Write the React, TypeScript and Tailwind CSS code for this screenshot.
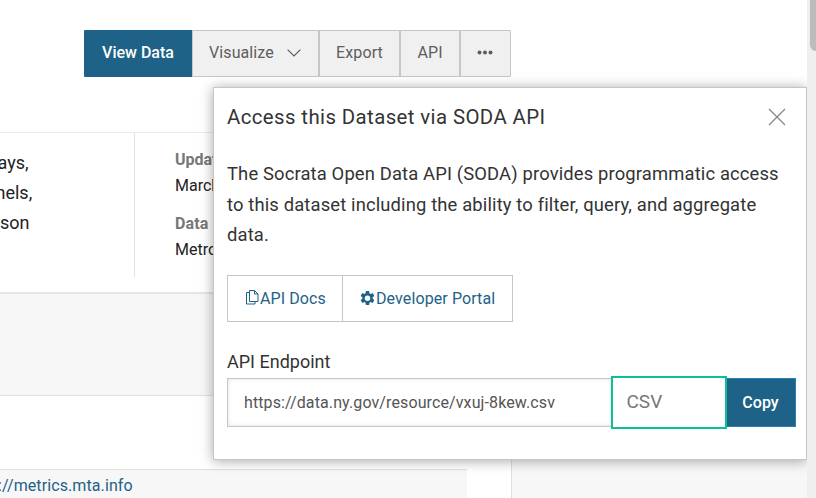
import React from "react";

const toolButton =
  "h-[47px] shrink-0 border border-[#c6c6c6] bg-[#f0f0f0] flex items-center text-[#5e5e5e] text-[16px] leading-none pb-[1px] tracking-[0.1px]";

function Toolbar() {
  return (
    <div className="flex pl-[84px] pt-[30px] h-[132px] items-start">
      <button className="flex h-[47px] w-[108px] items-center justify-center rounded-l-[1px] bg-[#1e6287] pb-[1px] text-[16px] font-medium leading-none text-white">
        View Data
      </button>
      <button className={`${toolButton} w-[127px] pl-4`}>
        Visualize
        <svg className="ml-[13px] mb-px" width="14" height="8" viewBox="0 0 14 8" fill="none" stroke="#5e5e5e" strokeWidth="1.2">
          <path d="M0.6 0.6 7 7 13.4 0.6" />
        </svg>
      </button>
      <button className={`${toolButton} w-[81px] justify-center`}>Export</button>
      <button className={`${toolButton} w-[60px] justify-center`}>API</button>
      <button className={`${toolButton} w-[51px] justify-center rounded-r-[1px]`}>
        <svg className="mb-[2px] mr-[2px]" width="16" height="5" viewBox="0 0 16 5" fill="#5e5e5e">
          <circle cx="2.5" cy="2.5" r="2" />
          <circle cx="8" cy="2.5" r="2" />
          <circle cx="13.5" cy="2.5" r="2" />
        </svg>
      </button>
    </div>
  );
}

function Page() {
  return (
    <div className="flex h-[498px] w-[807px] shrink-0 flex-col overflow-hidden bg-[#f7f7f7]">
      <div className="h-[294px] shrink-0 border-b-2 border-[#e4e4e4] bg-white">
        <Toolbar />
        <div className="flex h-[145px] border-t border-[#ebebeb]">
          <div className="h-[144px] w-[135px] border-r border-[#e2e2e2] pt-[15px] text-[18px] leading-[30px] text-[#222] whitespace-nowrap">
            <p className="-ml-[2.5px]">ays,</p>
            <p className="-ml-[4.5px]">nels,</p>
            <p>son</p>
          </div>
          <div className="pl-10 pt-[14px] text-[16px] leading-[26px] text-[#222] whitespace-nowrap">
            <p className="font-bold text-[#777]">Updated</p>
            <p>March 5, 2024</p>
            <p className="mt-3 font-bold tracking-[0.1px] text-[#777]">Data</p>
            <p>Metropolitan</p>
          </div>
        </div>
      </div>
      <div className="mt-[101px] h-[103px] w-[512px] border-r border-t border-[#e0e0e0] bg-white pt-[73px]">
        <div className="h-[30px] w-[467px] border-t border-[#e0e0e0] bg-[#f7f7f7] pt-[5px] text-[16px] leading-[22px] tracking-[0.1px] text-[#1e6287]">
          <span className="-ml-[2px]">://metrics.mta.info</span>
        </div>
      </div>
    </div>
  );
}

function ApiPanel() {
  return (
    <section className="absolute left-[213px] top-[87px] flex h-[373px] w-[594px] flex-col border border-[#c6c6c6] bg-white px-[13px] text-[#333] shadow-[0_1px_12px_rgba(0,0,0,0.35)]">
      <header className="flex h-[58px] items-center justify-between pr-[7px]">
        <h2 className="text-[20.4px] leading-none tracking-[0.4px]">Access this Dataset via SODA API</h2>
        <svg width="18" height="18" viewBox="0 0 18 18" stroke="#888" strokeWidth="1.3">
          <path d="M1 1 17 17M17 1 1 17" />
        </svg>
      </header>
      <p className="mt-[13px] whitespace-nowrap text-[18.4px] leading-[30.6px] tracking-[0.14px]">
        The Socrata Open Data API (SODA) provides programmatic access
        <br />
        to this dataset including the ability to filter, query, and aggregate
        <br />
        data.
      </p>
      <div className="mt-[24px] flex h-[47px] text-[16px] leading-none tracking-[0.1px] text-[#1e6287]">
        <a className="flex w-[116px] items-center border border-[#c6c6c6] pt-px pl-[17px]">
          <svg className="mr-[1px] mb-[2px]" width="14" height="15" viewBox="0 0 14 15" fill="none" stroke="currentColor">
            <path d="M4.5 0.5h5l3.5 3.5v7.5h-8.5zM9.5 0.5v3.5h3.5M4.5 2.5h-3v11.5h8.5v-2.5" />
          </svg>
          API Docs
        </a>
        <a className="-ml-px flex w-[171px] items-center border border-[#c6c6c6] pt-px pl-[17px]">
          <svg className="mr-[1px] mb-px" width="15" height="15" viewBox="0 0 16 16" fill="currentColor">
            <path fillRule="evenodd" d="M6.3 0h3.4l.4 2.3 1.3.8 2.2-.9 1.7 3-1.8 1.4v1.6l1.8 1.5-1.7 3-2.2-.9-1.3.8-.4 2.4H6.3l-.4-2.4-1.3-.8-2.2.9-1.7-3 1.8-1.5V6.6L.7 5.2l1.7-3 2.2.9 1.3-.8zM8 4.9a2.9 2.9 0 1 0 0 5.8 2.9 2.9 0 0 0 0-5.8z" />
          </svg>
          Developer Portal
        </a>
      </div>
      <h3 className="mt-[30px] text-[18px] leading-[20px]">API Endpoint</h3>
      <div className="mt-[4px] flex items-center -mr-[3px]">
        <div className="flex h-[49px] w-[384px] items-center border border-r-0 border-[#c6c6c6] pt-px pl-4 text-[16px] leading-none tracking-[0.11px] text-[#555] shadow-[inset_0_0_4px_rgba(0,0,0,0.12)]">
          https://data.ny.gov/resource/vxuj-8kew.csv
        </div>
        <div className="flex h-[53px] w-[116px] items-center border-2 border-[#0bbf9b] bg-white pb-[2px] pl-[13.5px] text-[19px] leading-none text-[#777]">
          CSV
        </div>
        <button className="flex h-[49px] w-[69px] items-center justify-center border border-l-0 border-[#2780b5] bg-[#1e6287] pt-px pr-px text-[16px] font-medium leading-none text-white">
          Copy
        </button>
      </div>
    </section>
  );
}

export default function App() {
  return (
    <main className="relative flex h-[498px] w-[816px] overflow-hidden bg-white font-['Roboto',sans-serif]">
      <Page />
      <ApiPanel />
      <aside className="z-10 h-[498px] w-[9px] bg-[#efefef] pl-[3px]">
        <div className="h-[51px] w-[12px] rounded-b-[6px] bg-[#bcbcbc]" />
      </aside>
    </main>
  );
}
